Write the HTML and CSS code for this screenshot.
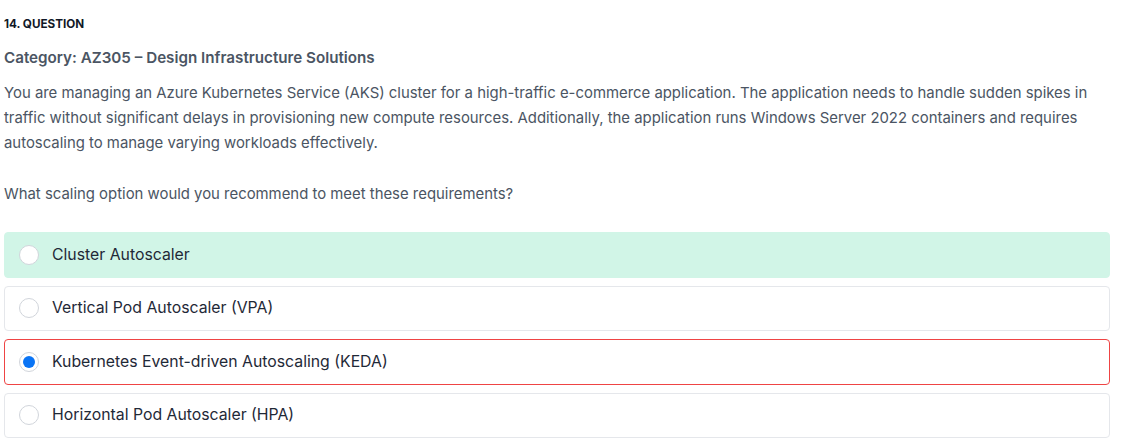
FILE: index.html
```html
<!DOCTYPE html>
<html>
<head>
<meta charset="utf-8">
<link rel="stylesheet" href="styles.css">
</head>
<body>
<div class="question">
  <div class="q-label">14. QUESTION</div>
  <div class="q-category">Category: AZ305 – Design Infrastructure Solutions</div>
  <p class="q-text">You are managing an Azure Kubernetes Service (AKS) cluster for a high-traffic e-commerce application. The application needs to handle sudden spikes in traffic without significant delays in provisioning new compute resources. Additionally, the application runs Windows Server 2022 containers and requires autoscaling to manage varying workloads effectively.</p>
  <p class="q-text q-ask">What scaling option would you recommend to meet these requirements?</p>
  <div class="options">
    <div class="option correct"><span class="radio"></span><span class="opt-text">Cluster Autoscaler</span></div>
    <div class="option"><span class="radio"></span><span class="opt-text">Vertical Pod Autoscaler (VPA)</span></div>
    <div class="option wrong"><span class="radio checked"></span><span class="opt-text">Kubernetes Event-driven Autoscaling (KEDA)</span></div>
    <div class="option"><span class="radio"></span><span class="opt-text">Horizontal Pod Autoscaler (HPA)</span></div>
  </div>
</div>
</body>
</html>
```
FILE: styles.css
```css
* { box-sizing: border-box; }
body {
  margin: 0;
  background: #fff;
  font-family: Inter, "Noto Sans", sans-serif;
  color: #374151;
}
.question {
  padding: 17px 34px 0 4px;
}
.q-label {
  font-size: 11.7px;
  font-weight: 700;
  color: #111827;
  line-height: 14px;
}
.q-category {
  margin-top: 17px;
  font-size: 15.2px;
  font-weight: 600;
  color: #4b5563;
  line-height: 20px;
}
.q-text {
  margin: 12.5px 0 0;
  font-size: 14.9px;
  line-height: 25px;
  color: #4b5563;
}
.q-ask {
  margin-top: 26px;
}
.options {
  margin-top: 25.5px;
  display: flex;
  flex-direction: column;
  gap: 8px;
}
.option {
  height: 45.5px;
  display: flex;
  align-items: center;
  padding-left: 14px;
  border: 1px solid #e5e7eb;
  border-radius: 4px;
  font-size: 15.8px;
  color: #1f2937;
}
.option.correct {
  background: #d1f5e7;
  border-color: #d1f5e7;
}
.option.wrong {
  border-color: #ef4444;
}
.radio {
  width: 20px;
  height: 20px;
  border-radius: 50%;
  border: 1px solid #d1d5db;
  background: #fff;
  margin-right: 13px;
  flex: none;
  position: relative;
}
.radio.checked::after {
  content: "";
  position: absolute;
  left: 3px;
  top: 3px;
  width: 12px;
  height: 12px;
  border-radius: 50%;
  background: #0a74f5;
}
.opt-text {
  line-height: 20px;
}
```
